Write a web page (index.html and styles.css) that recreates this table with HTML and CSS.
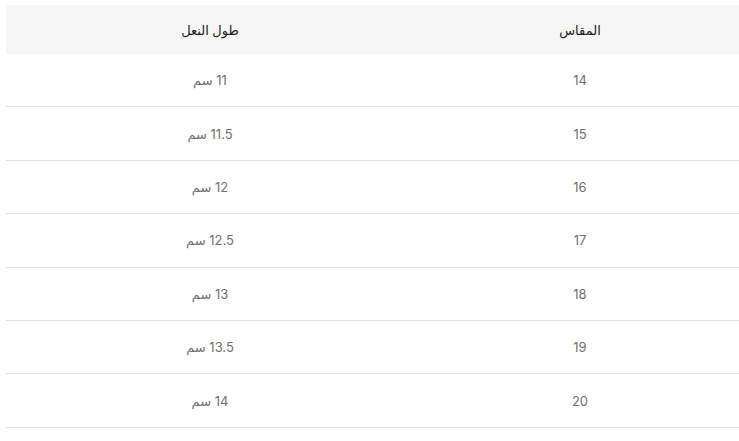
FILE: index.html
```html
<!DOCTYPE html>
<html lang="ar">
<head>
    <meta charset="UTF-8">
    <meta name="viewport" content="width=device-width, initial-scale=1.0">
    <title>جدول المقاسات</title>
    <link rel="stylesheet" href="styles.css">
</head>
<body>
    <table class="size-table" dir="rtl">
        <thead>
            <tr>
                <th class="col-size">المقاس</th>
                <th class="col-length">طول النعل</th>
            </tr>
        </thead>
        <tbody>
            <tr><td>14</td><td>11 سم</td></tr>
            <tr><td>15</td><td>11.5 سم</td></tr>
            <tr><td>16</td><td>12 سم</td></tr>
            <tr><td>17</td><td>12.5 سم</td></tr>
            <tr><td>18</td><td>13 سم</td></tr>
            <tr><td>19</td><td>13.5 سم</td></tr>
            <tr><td>20</td><td>14 سم</td></tr>
        </tbody>
    </table>
</body>
</html>
```

FILE: styles.css
```css
html {
    overflow: hidden;
}
body {
    margin: 5px 0 0 6px;
    background: #fff;
    font-family: Inter, "DejaVu Sans", sans-serif;
    font-size: 13px;
    color: #707070;
}
.size-table {
    width: 740px;
    border-collapse: collapse;
    table-layout: fixed;
}
.size-table th {
    height: 49px;
    padding: 0;
    background: #f6f6f6;
    color: #222;
    font-weight: 500;
    text-align: center;
}
.size-table .col-size {
    width: 332px;
}
.size-table .col-length {
    width: 408px;
}
.size-table td {
    height: 52.4px;
    padding: 0;
    text-align: center;
    border-bottom: 1px solid #e3e3e3;
}
```
